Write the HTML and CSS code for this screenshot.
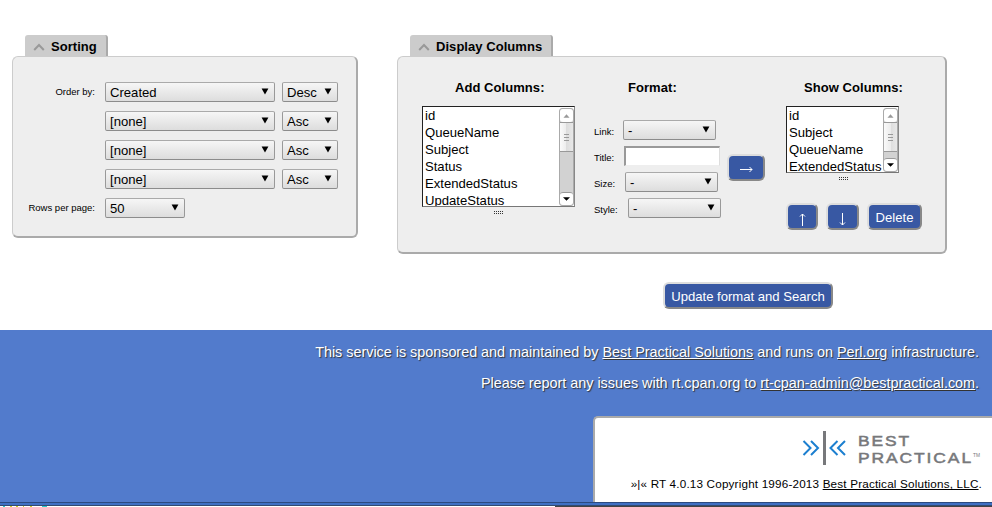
FILE: index.html
```html
<!DOCTYPE html>
<html lang="en">
<head>
<meta charset="utf-8">
<title>Query Builder</title>
<link rel="stylesheet" href="styles.css">
</head>
<body>
<svg class="defs" width="0" height="0">
  <symbol id="tri" viewBox="0 0 8 7"><path d="M0.6 0.5H7.4L4 6.5Z" fill="#000"/></symbol>
  <symbol id="chev" viewBox="0 0 12 8"><path d="M1.2 7L6 2L10.8 7" fill="none" stroke="#999" stroke-width="2"/></symbol>
  <symbol id="up" viewBox="0 0 8 4"><path d="M0.5 4L4 0L7.5 4Z" fill="#999"/></symbol>
  <symbol id="down" viewBox="0 0 8 4"><path d="M0 0H8L4 4Z" fill="#000"/></symbol>
</svg>
<main>
  <section class="box sorting">
    <h2 class="tab"><svg class="chev"><use href="#chev"/></svg><span>Sorting</span></h2>
    <div class="panel">
      <div class="row"><label>Order by:</label><div class="select wide"><span>Created</span><svg><use href="#tri"/></svg></div><div class="select order"><span>Desc</span><svg><use href="#tri"/></svg></div></div>
      <div class="row"><label></label><div class="select wide"><span>[none]</span><svg><use href="#tri"/></svg></div><div class="select order"><span>Asc</span><svg><use href="#tri"/></svg></div></div>
      <div class="row"><label></label><div class="select wide"><span>[none]</span><svg><use href="#tri"/></svg></div><div class="select order"><span>Asc</span><svg><use href="#tri"/></svg></div></div>
      <div class="row"><label></label><div class="select wide"><span>[none]</span><svg><use href="#tri"/></svg></div><div class="select order"><span>Asc</span><svg><use href="#tri"/></svg></div></div>
      <div class="row"><label>Rows per page:</label><div class="select rows"><span>50</span><svg><use href="#tri"/></svg></div></div>
    </div>
  </section>
  <section class="box display">
    <h2 class="tab"><svg class="chev"><use href="#chev"/></svg><span>Display Columns</span></h2>
    <div class="panel">
      <div class="add">
        <h3>Add Columns:</h3>
        <div class="list">
          <ul><li>id</li><li>QueueName</li><li>Subject</li><li>Status</li><li>ExtendedStatus</li><li>UpdateStatus</li></ul>
          <div class="scroll"><div class="btn"><svg><use href="#up"/></svg></div><div class="thumb"><i></i></div><div class="btn low"><svg><use href="#down"/></svg></div></div>
        </div>
        <div class="grip"></div>
      </div>
      <div class="format">
        <h3>Format:</h3>
        <div class="field link"><label>Link:</label><div class="select"><span>-</span><svg><use href="#tri"/></svg></div></div>
        <div class="field title"><label>Title:</label><div class="input"></div></div>
        <div class="field size"><label>Size:</label><div class="select"><span>-</span><svg><use href="#tri"/></svg></div></div>
        <div class="field style"><label>Style:</label><div class="select"><span>-</span><svg><use href="#tri"/></svg></div></div>
      </div>
      <div class="button arrow move"><svg width="13" height="7" viewBox="0 0 13 7"><path d="M0 3.5H12M9.5 1L12 3.5L9.5 6" /></svg></div>
      <div class="show">
        <h3>Show Columns:</h3>
        <div class="list">
          <ul><li>id</li><li>Subject</li><li>QueueName</li><li>ExtendedStatus</li></ul>
          <div class="scroll"><div class="btn"><svg><use href="#up"/></svg></div><div class="thumb"><i></i></div><div class="btn low"><svg><use href="#down"/></svg></div></div>
        </div>
        <div class="grip"></div>
        <div class="actions">
          <div class="button arrow"><svg width="7" height="13" viewBox="0 0 7 13"><path d="M3.5 13V1M1 3.5L3.5 1L6 3.5"/></svg></div>
          <div class="button arrow second"><svg width="7" height="13" viewBox="0 0 7 13"><path d="M3.5 0V12M1 9.5L3.5 12L6 9.5"/></svg></div>
          <div class="button delete">Delete</div>
        </div>
      </div>
    </div>
  </section>
</main>
<div class="submit"><div class="button update">Update format and Search</div></div>
<footer>
  <p class="sponsor">This service is sponsored and maintained by <a>Best Practical Solutions</a> and runs on <a>Perl.org</a> infrastructure.</p>
  <p class="report">Please report any issues with rt.cpan.org to <a>rt-cpan-admin@bestpractical.com</a>.</p>
  <div class="credit">
    <svg class="logo" width="180" height="36" viewBox="0 0 180 36">
      <g fill="none" stroke="#1c7fd0" stroke-width="2"><path d="M1.5 10L8.5 17L1.5 24M9 10L16 17L9 24M35.5 10L28.5 17L35.5 24M43 10L36 17L43 24"/></g>
      <path d="M21 0H24V34H21Z" fill="#77787b"/>
      <g class="brand"><text x="56" y="15" textLength="53" lengthAdjust="spacingAndGlyphs">BEST</text><text x="56" y="32" textLength="115" lengthAdjust="spacingAndGlyphs">PRACTICAL</text><text class="tm" x="171" y="26" textLength="7" lengthAdjust="spacingAndGlyphs">TM</text></g>
    </svg>
    <p class="copy"><span>»|« RT 4.0.13 Copyright 1996-2013 </span><a>Best Practical Solutions, LLC</a>.</p>
  </div>
</footer>
<div class="edge"></div>
</body>
</html>
```
FILE: styles.css
```css
* { box-sizing: border-box; }
html, body { margin: 0; height: 507px; overflow: hidden; }
body { background: #fff; color: #000; font-family: "Liberation Sans", Arial, sans-serif; font-size: 13.1px; }
h2, h3, p, ul { margin: 0; padding: 0; list-style: none; }
svg { display: block; }
.defs { display: none; }
main { display: flex; align-items: flex-start; gap: 39px; height: 282px; padding: 35px 0 0 12px; }
.tab { display: flex; align-items: center; width: 83px; height: 21px; margin-left: 13px; padding: 2px 0 0 8px; background: #ccc; border-right: 2px solid #aaa; border-radius: 3px 3px 0 0; font-size: 13px; letter-spacing: .05px; }
.display .tab { width: 143px; }
.chev { width: 12px; height: 8px; margin-right: 6px; }
.panel { background: #eee; border: 1px solid #ccc; border-right: 2px solid #aaa; border-bottom: 2px solid #aaa; border-radius: 6px; }
.sorting { width: 346px; }
.sorting .panel { display: flex; flex-direction: column; gap: 9px; height: 182px; padding-top: 25px; }
.row { display: flex; height: 20px; }
label { font-size: 9.5px; }
.row label { width: 82px; margin-right: 10px; line-height: 20px; text-align: right; }
.select { display: flex; align-items: center; justify-content: space-between; width: 93px; height: 20px; padding: 1px 5px 0 4px; border: 1px solid #aaa; border-color: #aaa #999 #8c8c8c #999; border-radius: 2px; background: linear-gradient(#f6f6f6, #ddd); line-height: 17px; }
.select svg { width: 8px; height: 7px; margin-top: -2px; }
.wide { width: 170px; margin-right: 7px; }
.order { width: 56px; }
.rows { width: 80px; }
.display { width: 550px; }
.display .panel { display: flex; height: 198px; }
h3 { height: 15px; font-size: 13px; line-height: 15px; letter-spacing: .06px; white-space: nowrap; }
.add { width: 153px; margin: 23px 0 0 24px; }
.add h3 { margin-left: 33px; }
.list { display: flex; height: 101px; margin-top: 11px; padding: 1px; overflow: hidden; background: #fff; border: 1px solid #222; border-color: #222 #888 #777 #222; }
.list ul { flex: 1; height: 98px; padding-left: 1px; overflow: hidden; }
.list li { height: 17px; font-size: 13.1px; line-height: 16px; white-space: nowrap; }
.scroll { display: flex; flex-direction: column; flex: none; width: 15px; height: 98px; background: #d2d2d2; border: 1px solid #aaa; border-radius: 3px; overflow: hidden; }
.list .scroll { margin-right: -1px; }
.btn { display: flex; align-items: center; justify-content: center; flex: none; height: 13px; background: #fff; border-radius: 3px; }
.btn svg { width: 7px; height: 4px; }
.thumb { display: flex; align-items: center; justify-content: center; height: 30px; border: solid #999; border-width: 1px 0; background: linear-gradient(90deg, #fafafa, #ececec 50%, #ddd 50%, #e8e8e8); }
.thumb i { width: 5px; height: 7px; background: repeating-linear-gradient(#999 0 1px, transparent 1px 3px); }
.low { margin-top: auto; border-top: 1px solid #999; }
.grip { width: 9px; height: 3px; margin: 4px auto 0; background: linear-gradient(transparent 1px, #eee 1px 2px, transparent 2px), repeating-linear-gradient(90deg, #333 0 1px, transparent 1px 2px); }
.format { width: 127px; margin: 23px 0 0 19px; }
.format h3 { margin: 0 0 25px 34px; }
.field { display: flex; height: 26px; }
.field label { width: 29px; padding-top: 6px; }
.title label { width: 30px; }
.size label { width: 31px; }
.style label { width: 34px; }
.input { width: 96px; height: 20px; background: #fff; border: 2px solid #999; border-right: 1px solid #ddd; border-bottom: 1px solid #eee; }
.button { display: flex; align-items: center; justify-content: center; flex: none; height: 27px; padding-top: 2px; background: #3858a3; border: 2px solid; border-color: #ddd #888 #888 #ddd; border-radius: 6px; color: #fff; white-space: nowrap; }
.button svg { fill: none; stroke: #fff; stroke-width: 1; }
.move { width: 38px; margin: 97px 0 0 6px; padding-top: 4px; }
.show { width: 136px; margin: 23px 0 0 21px; }
.show h3 { margin-left: 18px; }
.show .list { width: 113px; height: 67px; }
.show .list ul, .show .scroll { height: 64px; }
.show .grip { margin-left: 53px; }
.actions { display: flex; gap: 8px; margin: 23px 0 0; }
.actions .arrow { width: 32px; padding-top: 5px; }
.actions .second { width: 33px; }
.delete { width: 55px; }
.submit { height: 48px; padding-left: 663px; }
.update { width: 170px; }
footer { height: 172px; background: #527bcc; color: #fff; overflow: hidden; text-align: right; }
footer a { text-decoration: underline; }
.sponsor, .report { height: 31px; padding: 13px 13px 0 0; font-size: 14.4px; line-height: 18px; letter-spacing: -.016px; text-shadow: 1px 1px 1px #333; }
.credit { width: 399px; height: 86px; margin: 24px 0 0 593px; padding: 13px 10px 0 0; color: #000; background: #fff; border: 2px solid #aaa; border-width: 2px 0 0 2px; border-radius: 5px 0 0 0; }
.logo { margin-left: auto; }
.brand { fill: #77787b; stroke: #77787b; stroke-width: .5; font-size: 14.5px; letter-spacing: 1.6px; }
.brand .tm { font-size: 5px; stroke: none; letter-spacing: 0; }
.copy { margin-top: 9px; font-size: 11.7px; line-height: 15px; letter-spacing: .18px; white-space: pre; }
.edge { height: 5px; background: linear-gradient(#2c4a80 0 1px, #3f70c4 1px 3px, #334a70 3px 4px, transparent 4px), linear-gradient(90deg, #fff 3px, #2cc 3px 5px, #fff 5px 10px, #cc2 10px 12px, #fff 12px 16px, #cc2 16px 18px, #fff 18px 23px, #cc2 23px 24px, #fff 24px 30px, #cc2 30px 32px, #fff 32px 42px, #2cc 42px 47px, #fff 47px 555px, #444 555px); }
```
